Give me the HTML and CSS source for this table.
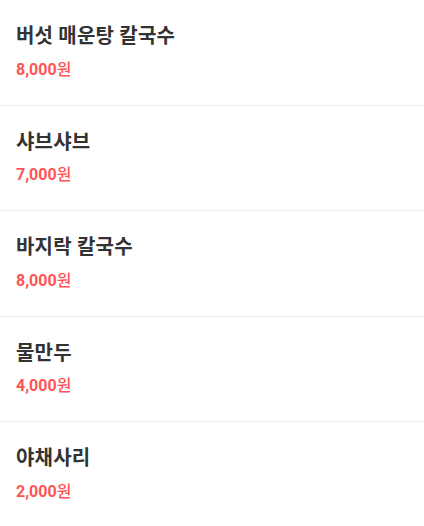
FILE: index.html
```html
<!DOCTYPE html>
<html lang="ko">
<head>
<meta charset="utf-8">
<link rel="stylesheet" href="styles.css">
</head>
<body>
<ul class="menu">
  <li class="item"><div class="name">버섯 매운탕 칼국수</div><div class="price">8,000<span class="won">원</span></div></li>
  <li class="item"><div class="name">샤브샤브</div><div class="price">7,000<span class="won">원</span></div></li>
  <li class="item"><div class="name">바지락 칼국수</div><div class="price">8,000<span class="won">원</span></div></li>
  <li class="item"><div class="name">물만두</div><div class="price">4,000<span class="won">원</span></div></li>
  <li class="item"><div class="name">야채사리</div><div class="price">2,000<span class="won">원</span></div></li>
</ul>
</body>
</html>
```
FILE: styles.css
```css
html, body { margin: 0; padding: 0; background: #fff; }
body { font-family: Roboto, "Noto Sans CJK KR", sans-serif; }
.menu { list-style: none; margin: 0; padding: 0; }
.item {
  padding: 22px 16px 23px;
  border-bottom: 1px solid #ececec;
  display: flex;
  flex-direction: column;
  gap: 7.6px;
}
.name { font-size: 20px; line-height: 28px; font-weight: 700; color: #333; letter-spacing: 0.2px; }
.price { font-size: 16px; line-height: 24px; font-weight: 700; color: #ff5454; }
.won { font-weight: 500; }
```
